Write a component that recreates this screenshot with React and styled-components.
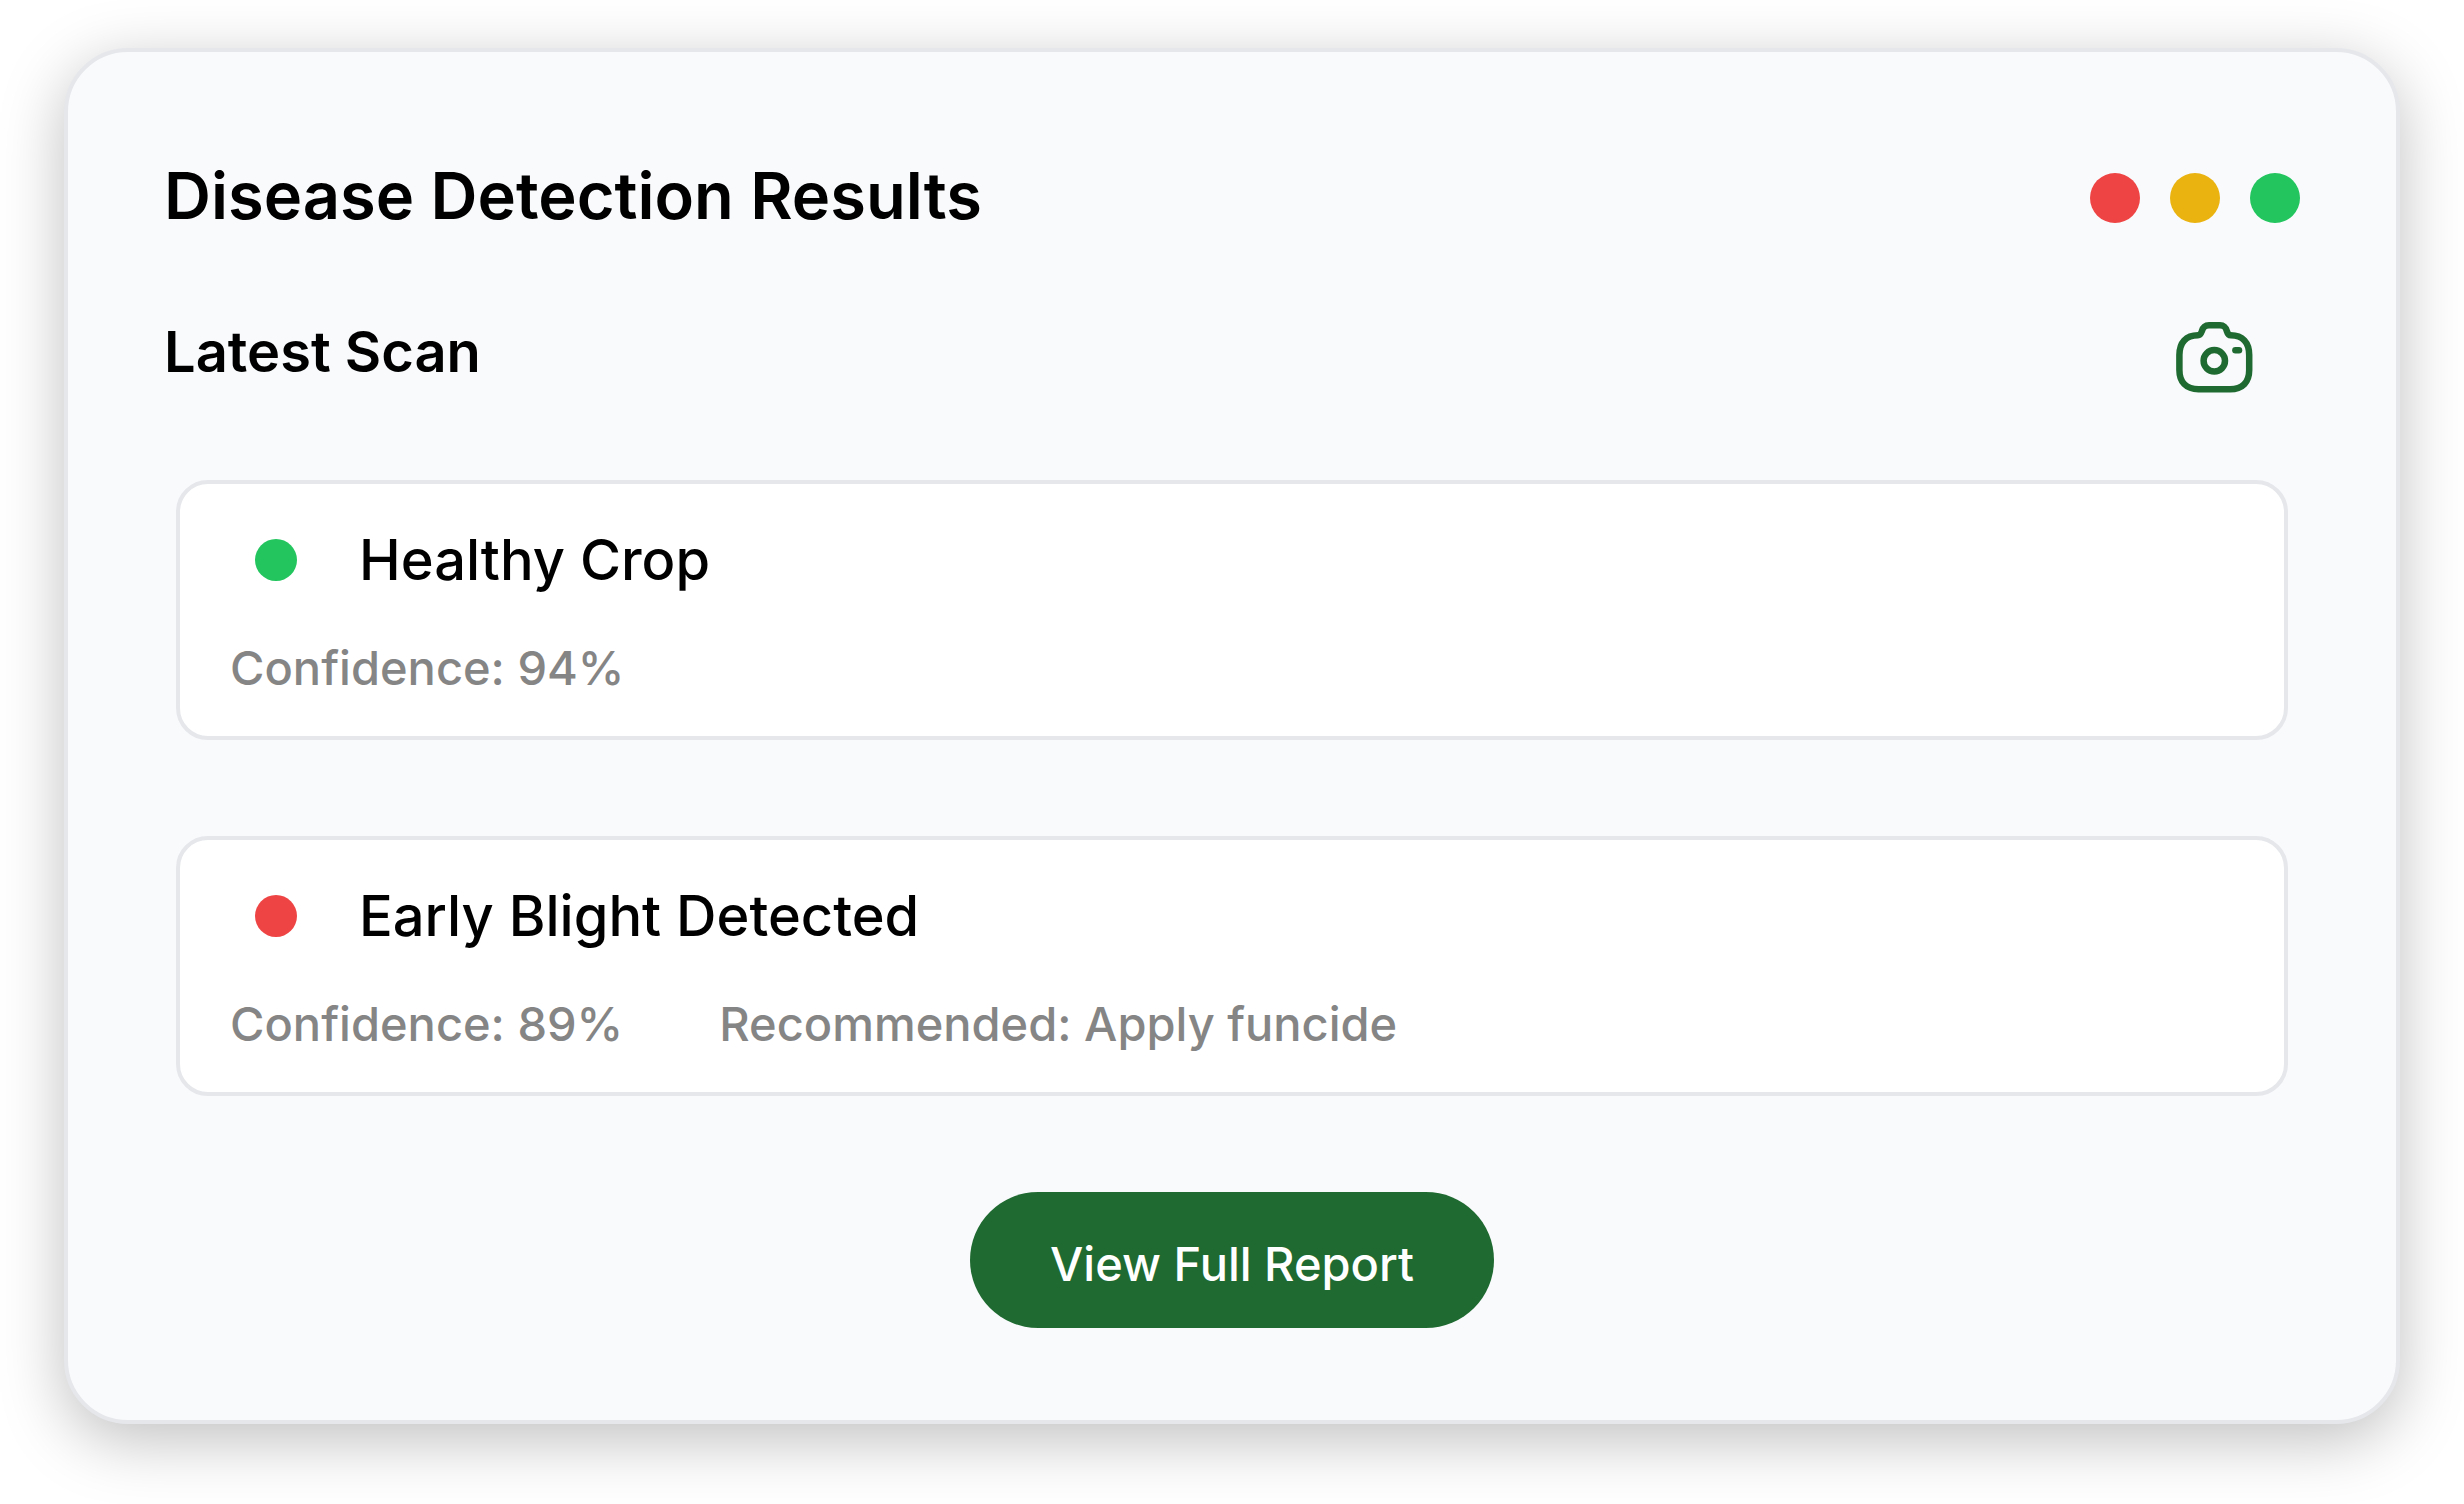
import React from "react";
import styled, { createGlobalStyle } from "styled-components";

const GlobalStyle = createGlobalStyle`
  *, *::before, *::after { box-sizing: border-box; }
  body {
    margin: 0;
    background: #ffffff;
    color: #000000;
    font-family: Inter, "Liberation Sans", sans-serif;
  }
  h1, h2, h3, p, ul { margin: 0; padding: 0; }
`;

const Page = styled.main`
  padding: 48px 64px 80px;
`;

const Card = styled.section`
  padding: 96px 96px 92px;
  border: 4px solid #e5e7eb;
  border-radius: 64px;
  background: #f9fafc;
  box-shadow: 0 16px 64px rgba(0, 0, 0, 0.25);
`;

const Header = styled.header`
  display: flex;
  align-items: center;
  justify-content: space-between;
`;

const Title = styled.h1`
  padding-bottom: 4px;
  font-size: 65px;
  font-weight: 600;
  line-height: 96px;
`;

const Lights = styled.div`
  display: flex;
  gap: 30px;
`;

const Dot = styled.span`
  flex: none;
  width: ${(p) => p.$size}px;
  height: ${(p) => p.$size}px;
  border-radius: 50%;
  background: ${(p) => p.$color};
`;

const SectionHead = styled.div`
  display: flex;
  align-items: flex-start;
  justify-content: space-between;
  margin-top: 68px;
  padding-right: 47px;
`;

const SectionTitle = styled.h2`
  font-size: 56px;
  font-weight: 600;
  line-height: 72px;
`;

const Icon = styled.svg`
  width: 80px;
  height: 80px;
  fill: none;
  stroke: #1f6a30;
  stroke-width: 6.5;
  stroke-linecap: round;
  stroke-linejoin: round;
`;

const Results = styled.ul`
  display: grid;
  gap: 96px;
  margin-top: 84px;
  padding: 0 12px;
  list-style: none;
`;

const Result = styled.li`
  display: grid;
  gap: 42px;
  padding: 40px 50px 38px;
  border: 4px solid #e5e7eb;
  border-radius: 32px;
  background: #ffffff;
`;

const ResultHead = styled.div`
  display: flex;
  align-items: center;
  gap: 62px;
  padding-left: 25px;
`;

const ResultTitle = styled.h3`
  font-size: 56px;
  font-weight: 500;
  line-height: 72px;
`;

const Details = styled.div`
  display: flex;
  gap: 96px;
`;

const Detail = styled.p`
  color: #858585;
  font-size: 47px;
  font-weight: 500;
  line-height: 60px;
`;

const Actions = styled.div`
  display: flex;
  justify-content: center;
  margin-top: 96px;
`;

const ReportButton = styled.button`
  padding: 38px 80px 30px;
  border: 0;
  border-radius: 68px;
  background: #1f6a30;
  color: #ffffff;
  font: inherit;
  font-size: 47px;
  font-weight: 500;
  line-height: 68px;
  cursor: pointer;
`;

const RED = "#ef4444";
const YELLOW = "#eab310";
const GREEN = "#22c55e";

const results = [
  { title: "Healthy Crop", color: GREEN, details: ["Confidence: 94%"] },
  {
    title: "Early Blight Detected",
    color: RED,
    details: ["Confidence: 89%", "Recommended: Apply funcide"],
  },
];

function CameraIcon() {
  return (
    <Icon viewBox="-3 -6 80 80" aria-hidden="true">
      <path d="M22 13.2C24 13.2 25 11.5 25.7 9.5C27 5 28.7 3.3 33 3.3H44C48.1 3.3 49.7 5 51 9.5C51.6 11.5 52.6 13.2 54.7 13.2C66.5 13.2 73.2 20.5 73.2 33V48C73.2 60 66.5 67.2 54 67.2H22.6C10 67.2 3.4 60 3.4 48V33C3.4 20.5 10 13.2 22 13.2Z" />
      <circle cx="38.3" cy="38.8" r="10.7" />
      <path d="M59.4 28.2H63" />
    </Icon>
  );
}

export default function App() {
  return (
    <>
      <GlobalStyle />
      <Page>
        <Card>
          <Header>
            <Title>Disease Detection Results</Title>
            <Lights>
              {[RED, YELLOW, GREEN].map((color) => (
                <Dot key={color} $size={50} $color={color} />
              ))}
            </Lights>
          </Header>
          <SectionHead>
            <SectionTitle>Latest Scan</SectionTitle>
            <CameraIcon />
          </SectionHead>
          <Results>
            {results.map((result) => (
              <Result key={result.title}>
                <ResultHead>
                  <Dot $size={42} $color={result.color} />
                  <ResultTitle>{result.title}</ResultTitle>
                </ResultHead>
                <Details>
                  {result.details.map((detail) => (
                    <Detail key={detail}>{detail}</Detail>
                  ))}
                </Details>
              </Result>
            ))}
          </Results>
          <Actions>
            <ReportButton type="button">View Full Report</ReportButton>
          </Actions>
        </Card>
      </Page>
    </>
  );
}
